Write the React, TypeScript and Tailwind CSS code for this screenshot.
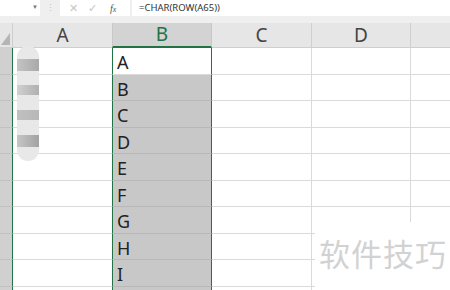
import React from "react";

const rows = ["A", "B", "C", "D", "E", "F", "G", "H", "I", ""];
const heights = [27, 26, 27, 26, 27, 26, 27, 26, 27, 26];

export default function App() {
  return (
    <div
      className="relative w-[450px] h-[290px] overflow-hidden bg-white"
      style={{ fontFamily: '"Noto Sans", "Liberation Sans", sans-serif' }}
    >
      {/* Formula bar */}
      <div className="flex h-[23px] bg-[#efefef]">
        <div className="relative w-[40px] h-[16px] bg-white">
          <span className="absolute left-[32px] top-[3px] text-[6px] text-[#777]">▼</span>
        </div>
        <div className="w-[20px] h-[16px] flex items-center justify-center text-[9px] text-[#c4c4c4]">
          ⋮
        </div>
        <div className="w-[70px] h-[16px] bg-white flex items-center text-[#c4c4c4]">
          <span className="ml-[9px] text-[11px]">✕</span>
          <span className="ml-[10px] text-[11px]">✓</span>
          <span
            className="ml-[13px] text-[10px] italic text-[#555]"
            style={{ fontFamily: '"Liberation Serif", serif' }}
          >
            f<span className="text-[8px]">x</span>
          </span>
        </div>
        <div className="ml-[2px] flex-1 h-[16px] bg-white flex items-center pl-[7px] text-[9.5px] text-[#333]">
          =CHAR(ROW(A65))
        </div>
      </div>

      {/* Column headers */}
      <div className="flex h-[25px] bg-[#e6e6e6] text-[19px] text-[#444]">
        <div className="relative w-[13px] border-r border-b border-[#cfcfcf] overflow-hidden">
          <div className="absolute right-[2px] bottom-[2px] w-0 h-0 border-l-[9px] border-l-transparent border-b-[12px] border-b-[#b5b5b5]" />
        </div>
        <div className="w-[99px] flex items-center justify-center border-b border-[#cfcfcf]">A</div>
        <div className="w-[100px] flex items-center justify-center bg-[#d3d3d3] text-[#217346] border-x border-x-[#c8c8c8] border-b-2 border-b-[#217346]">
          B
        </div>
        <div className="w-[100px] flex items-center justify-center border-r border-b border-[#cfcfcf]">C</div>
        <div className="w-[99px] flex items-center justify-center border-r border-b border-[#cfcfcf]">D</div>
        <div className="flex-1 border-b border-[#cfcfcf]" />
      </div>

      {/* Grid rows */}
      {rows.map((letter, i) => (
        <div key={i} className="flex" style={{ height: heights[i] }}>
          <div className="w-[13px] bg-[#d0d0d0] border-b border-[#c2c2c2] border-r border-r-[#217346]" />
          <div className="w-[99px] border-b border-[#dadada]" />
          <div
            className={
              i === 0
                ? "w-[100px] bg-white border-x border-x-[#217346] border-b border-b-[#dadada] flex items-center pl-[4px] pt-[3px] text-[18px] text-[#222]"
                : "w-[100px] bg-[#c8c8c8] border-x border-x-[#217346] border-b border-b-[#b8b8b8] flex items-center pl-[4px] pt-[3px] text-[18px] text-[#222]"
            }
          >
            {letter}
          </div>
          <div className="w-[100px] border-r border-b border-[#dadada]" />
          <div className="w-[99px] border-r border-b border-[#dadada]" />
          <div className="flex-1 border-b border-[#dadada]" />
        </div>
      ))}

      {/* Blurred row numbers overlay */}
      <div className="absolute left-[17px] top-[46px] w-[22px] h-[115px] rounded-full bg-[#e8e8e8] blur-[0.5px] overflow-hidden">
        <div className="absolute left-0 top-[13px] w-full h-[12px] bg-gradient-to-r from-[#c4c4c4] to-[#a9a9a9]" />
        <div className="absolute left-0 top-[39px] w-full h-[10px] bg-gradient-to-r from-[#d0d0d0] to-[#b0b0b0]" />
        <div className="absolute left-0 top-[64px] w-full h-[10px] bg-gradient-to-r from-[#c0c0c0] to-[#b8b8b8]" />
        <div className="absolute left-0 top-[89px] w-full h-[12px] bg-gradient-to-r from-[#c6c6c6] to-[#a2a2a2]" />
      </div>

      {/* Watermark */}
      <div className="absolute left-[315px] top-[222px] w-[135px] h-[68px] bg-white flex items-start pl-[4px] pt-[15px]">
        <span
          className="text-[31px] leading-none tracking-[1px] text-[#d2d2d2]"
          style={{ fontFamily: '"Noto Sans CJK SC", "Noto Sans", sans-serif' }}
        >
          软件技巧
        </span>
      </div>
    </div>
  );
}
